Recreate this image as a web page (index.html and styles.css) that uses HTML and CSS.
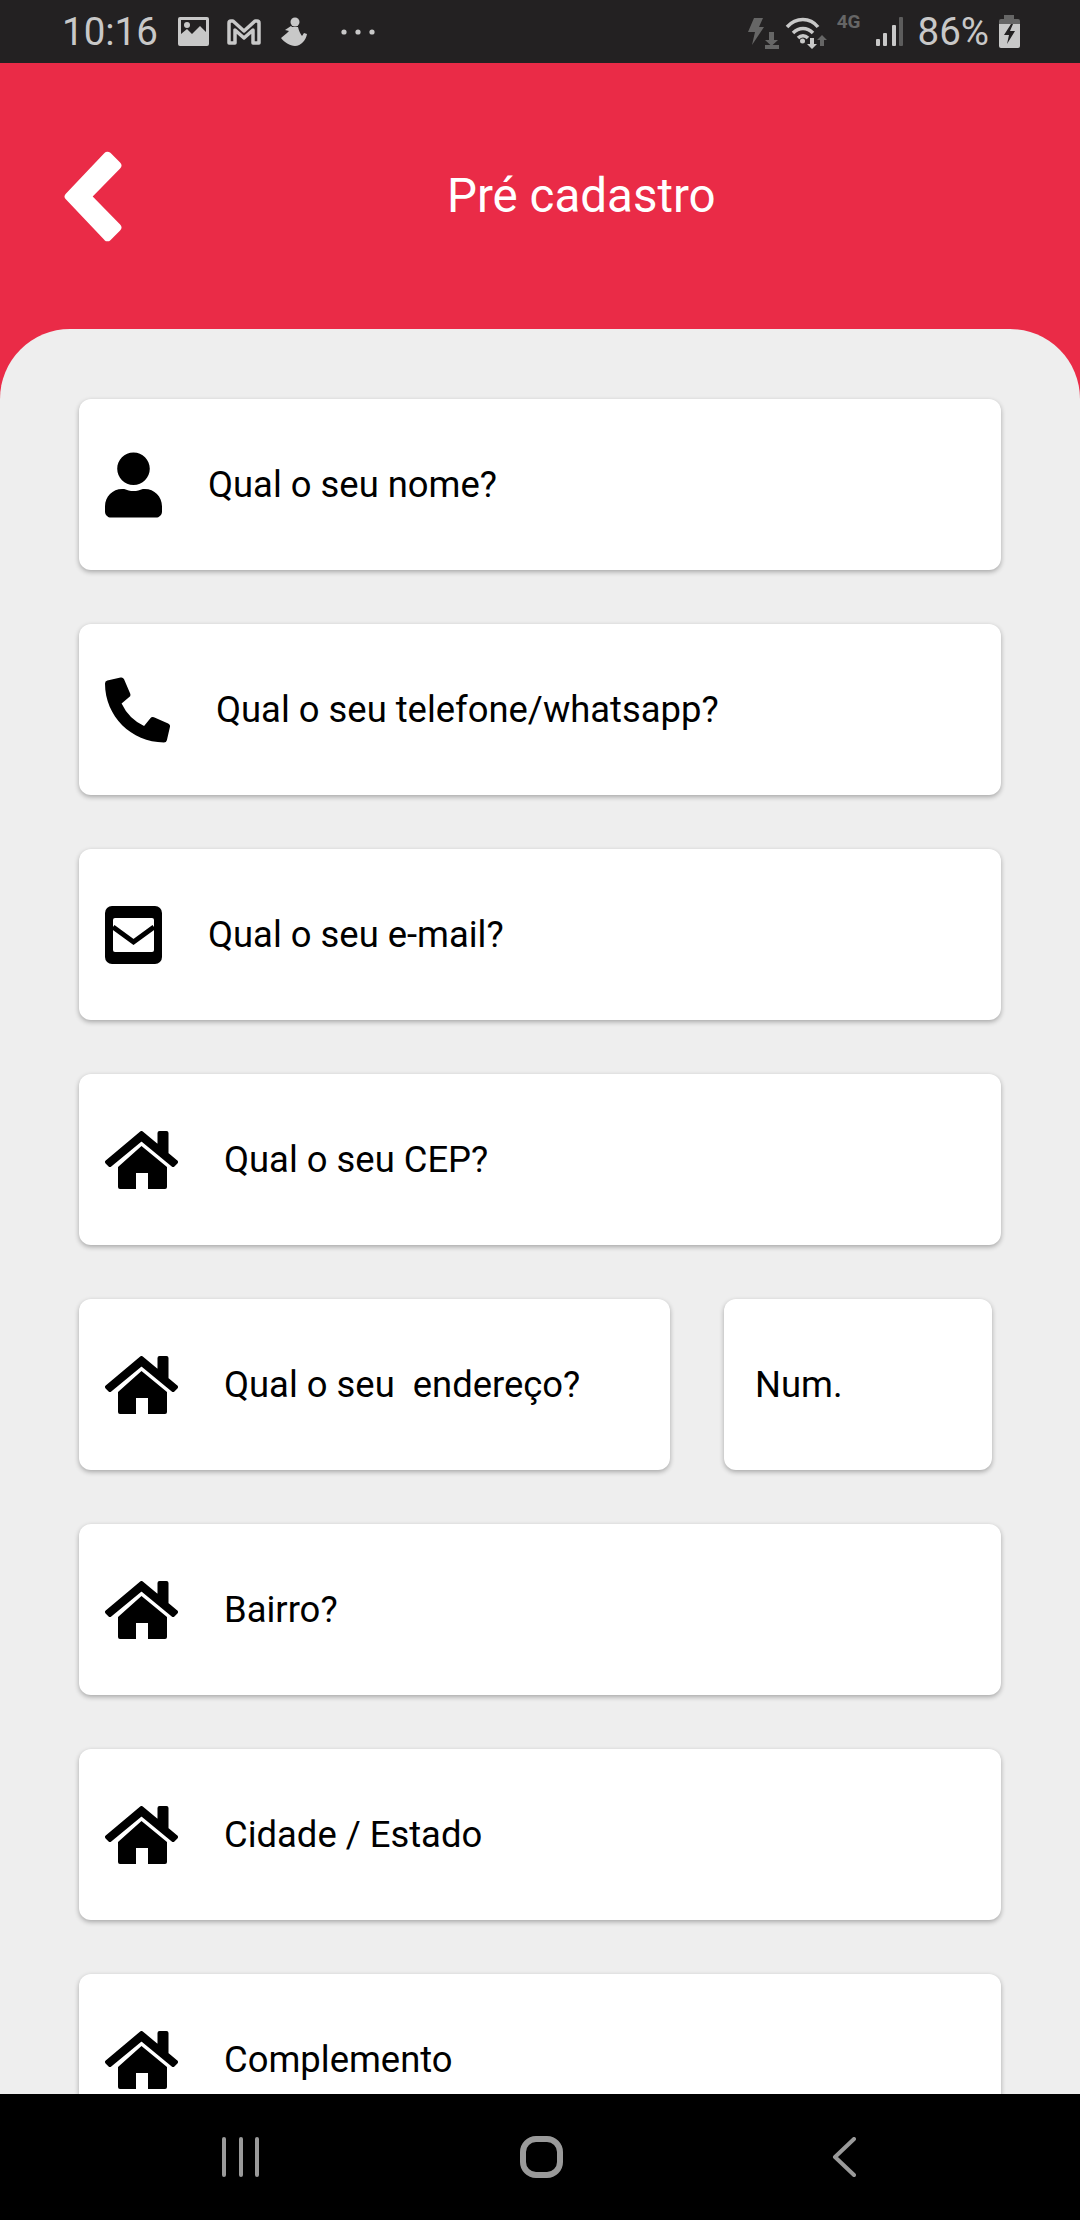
FILE: index.html
```html
<!DOCTYPE html>
<html lang="pt-BR">

<head>
    <meta charset="UTF-8">
    <title>Pré cadastro</title>
    <meta name="viewport" content="width=device-width, initial-scale=1.0">
    <link rel="stylesheet" href="styles.css">
</head>

<body>
    <svg class="sprites" width="0" height="0">
        <symbol id="home" viewBox="0 0 73 58">
            <path d="M36.500 2 L2 31 L5 34 L36.500 8 L68 34 L71 31 L61.500 23 V2 H54.500 V17 Z" stroke="#000" stroke-width="4" stroke-linejoin="round" />
            <path d="M13 36 L36.500 15 L62 36 V56 Q62 58 60 58 H43 V42 H31 V58 H15 Q13 58 13 56 Z" />
        </symbol>
    </svg>

    <div class="phone">
        <div class="statusbar">
            <span class="clock">10:16</span>
            <svg class="st-image" width="31" height="29" viewBox="0 0 31 29">
                <path fill-rule="evenodd" d="M2 0H29Q31 0 31 2V27Q31 29 29 29H2Q0 29 0 27V2Q0 0 2 0ZM3 3V17L9 12L14 17L22 9L28 15V3Z" />
                <circle cx="9" cy="8" r="3" />
            </svg>
            <svg class="st-mail" width="34" height="26" viewBox="0 0 34 26">
                <path d="M2 24V4Q2 2 4 2H6L17 12L28 2H30Q32 2 32 4V24H26V11L17 19L8 11V24Z" fill="none" stroke="#c8c8c8" stroke-width="3.500" stroke-linejoin="round" />
            </svg>
            <svg class="st-figure" width="27" height="29" viewBox="0 0 27 29">
                <circle cx="14" cy="5" r="4.500" />
                <path d="M11 10H17C18 14 19 16 21 19L23 16L26 17C25 23 20 29 14 29C9 29 3 25 0 21L6 16L8 14L4 13L10 9Z" />
            </svg>
            <svg class="st-dots" width="34" height="6" viewBox="0 0 34 6">
                <circle cx="3" cy="3" r="2.600" />
                <circle cx="17" cy="3" r="2.600" />
                <circle cx="31" cy="3" r="2.600" />
            </svg>

            <div class="status-right">
                <svg class="st-flash" width="31" height="31" viewBox="0 0 31 31">
                    <path d="M6 0H15L11 9H16L4 27L7 14H0Z" />
                    <path d="M21 14H26V22H30L23.500 28L17 22H21ZM17 27H31V31H17Z" />
                </svg>
                <svg class="st-wifi" width="42" height="32" viewBox="0 0 42 32">
                    <path d="M2 10C11 0 25 0 33 10M8 16C14 10 22 10 28 16M13 21C16 18 20 18 23 21" fill="none" stroke="#c8c8c8" stroke-width="3.500" />
                    <circle cx="17.500" cy="24" r="2.500" fill="#c8c8c8" />
                    <path d="M25 21H29V27H32L27 32L22 27H25Z" fill="#c8c8c8" />
                    <path d="M35 29V23H32L37 18L42 23H39V29Z" fill="#666" />
                </svg>
                <span class="net">4G</span>
                <svg class="st-signal" width="27" height="29" viewBox="0 0 27 29">
                    <rect x="0" y="22" width="4" height="7" rx="1" fill="#c8c8c8" />
                    <rect x="7" y="16" width="4" height="13" rx="1" fill="#c8c8c8" />
                    <rect x="16" y="8" width="4" height="21" rx="1" fill="#c8c8c8" />
                    <rect x="23" y="0" width="4" height="29" rx="1" fill="#5c5c5c" />
                </svg>
                <span class="percent">86%</span>
                <svg class="st-battery" width="21" height="33" viewBox="0 0 21 33">
                    <path d="M5 0H15V4H19Q21 4 21 6V9H0V6Q0 4 2 4H5Z" fill="#666" />
                    <path d="M0 9H21V31Q21 33 19 33H2Q0 33 0 31Z" fill="#c8c8c8" />
                    <path d="M12 9L5 20H10L8 29L16 16H11L14 9Z" fill="#232122" />
                </svg>
            </div>
        </div>

        <header class="topbar">
            <svg class="back" width="60" height="93" viewBox="0 0 58 90">
                <polygon points="5.600,45 43,5.600 52.400,15 23,45 52.400,75 43,84.400" fill="#fff" stroke="#fff" stroke-width="8" stroke-linejoin="round" />
            </svg>
            <h1>Pré cadastro</h1>
        </header>

        <main class="form">
            <div class="field">
                <svg class="icon" width="57" height="66" viewBox="0 0 448 512">
                    <path d="M224 256c70.700 0 128-57.300 128-128S294.700 0 224 0 96 57.300 96 128s57.300 128 128 128zm89.600 32h-16.700c-22.200 10.200-46.900 16-72.900 16s-50.600-5.800-72.900-16h-16.700C60.200 288 0 348.200 0 422.400V464c0 26.500 21.500 48 48 48h352c26.500 0 48-21.500 48-48v-41.600c0-74.200-60.200-134.400-134.400-134.400z" />
                </svg>
                <span>Qual o seu nome?</span>
            </div>
            <div class="field">
                <svg class="icon" width="65" height="66" viewBox="0 0 512 512">
                    <path d="M497.400 361.800l-112-48a24 24 0 0 0-28 6.900l-49.600 60.600A370.700 370.700 0 0 1 130.600 204.100l60.600-49.600a24 24 0 0 0 6.900-28l-48-112A24.200 24.200 0 0 0 122.600.6l-104 24A24 24 0 0 0 0 48c0 256.500 207.900 464 464 464a24 24 0 0 0 23.400-18.600l24-104a24.300 24.300 0 0 0-14-27.600z" />
                </svg>
                <span>Qual o seu telefone/whatsapp?</span>
            </div>
            <div class="field">
                <svg class="icon" width="57" height="58" viewBox="0 0 57 58">
                    <rect width="57" height="58" rx="7" />
                    <rect x="8" y="12" width="41" height="34" rx="2" fill="#fff" />
                    <path d="M8 21L28.500 36L49 21" fill="none" stroke="#000" stroke-width="5" />
                </svg>
                <span>Qual o seu e-mail?</span>
            </div>
            <div class="field">
                <svg class="icon" width="73" height="58"><use href="#home" /></svg>
                <span>Qual o seu CEP?</span>
            </div>
            <div class="field-row">
                <div class="field field-street">
                    <svg class="icon" width="73" height="58"><use href="#home" /></svg>
                    <span>Qual o seu &nbsp;endereço?</span>
                </div>
                <div class="field field-num">
                    <span>Num.</span>
                </div>
            </div>
            <div class="field">
                <svg class="icon" width="73" height="58"><use href="#home" /></svg>
                <span>Bairro?</span>
            </div>
            <div class="field">
                <svg class="icon" width="73" height="58"><use href="#home" /></svg>
                <span>Cidade / Estado</span>
            </div>
            <div class="field">
                <svg class="icon" width="73" height="58"><use href="#home" /></svg>
                <span>Complemento</span>
            </div>
        </main>

        <nav class="navbar">
            <svg class="nav-recents" width="38" height="40" viewBox="0 0 38 40">
                <path d="M2 2V38M19 2V38M35 2V38" />
            </svg>
            <svg class="nav-home" width="43" height="42" viewBox="0 0 43 42">
                <rect x="3" y="3" width="37" height="36" rx="13" />
            </svg>
            <svg class="nav-back" width="24" height="40" viewBox="0 0 24 40">
                <path d="M22 2L3 20L22 38" />
            </svg>
        </nav>
    </div>
</body>

</html>
```

FILE: styles.css
```css
* {
    box-sizing: border-box;
}

html,
body {
    margin: 0;
    padding: 0;
}

body {
    font-family: 'Roboto', 'Liberation Sans', sans-serif;
    background-color: #ea2b47;
}

.sprites {
    position: absolute;
}

.phone {
    width: 1080px;
    height: 2220px;
    display: flex;
    flex-direction: column;
    overflow: hidden;
}

/* Status bar */
.statusbar {
    height: 63px;
    flex-shrink: 0;
    display: flex;
    align-items: center;
    padding: 0 60px 0 62px;
    background-color: #232122;
    color: #c8c8c8;
    fill: #c8c8c8;
    font-size: 38.500px;
}

.clock {
    margin-right: 20px;
}

.st-mail {
    margin-left: 18px;
}

.st-figure {
    margin-left: 20px;
}

.st-dots {
    margin-left: 33px;
}

.status-right {
    margin-left: auto;
    display: flex;
    align-items: center;
}

.st-flash {
    fill: #666;
    margin-top: 4px;
}

.st-wifi {
    margin-left: 6px;
    margin-top: 3px;
}

.net {
    margin-left: 10px;
    margin-bottom: 20px;
    font-size: 19px;
    font-weight: 700;
    color: #666;
}

.st-signal {
    margin-left: 15px;
}

.percent {
    margin-left: 15px;
}

.st-battery {
    margin-left: 10px;
}

/* Red header */
.topbar {
    height: 266px;
    flex-shrink: 0;
    display: flex;
    align-items: center;
    padding-left: 63px;
    color: white;
}

.topbar h1 {
    margin: 0 0 0 324px;
    font-size: 47.500px;
    font-weight: 400;
}

/* Form */
.form {
    flex: 1;
    min-height: 0;
    overflow: hidden;
    display: flex;
    flex-direction: column;
    gap: 54px;
    padding: 70px 79px 0;
    background-color: #eeeeee;
    border-radius: 70px 70px 0 0;
}

.field {
    height: 171px;
    flex-shrink: 0;
    display: flex;
    align-items: center;
    gap: 46px;
    padding-left: 26px;
    background-color: white;
    border-radius: 12px;
    box-shadow: 0 2px 5px rgba(0, 0, 0, 0.3);
    font-size: 36.400px;
    color: black;
}

.field-row {
    display: flex;
    gap: 54px;
}

.field-street {
    width: 591px;
}

.field-num {
    width: 268px;
    padding-left: 31px;
}

/* Android nav */
.navbar {
    height: 126px;
    flex-shrink: 0;
    display: flex;
    align-items: center;
    padding-left: 222px;
    background-color: black;
}

.navbar svg {
    fill: none;
    stroke: #9a9a9a;
    stroke-linecap: round;
    stroke-linejoin: round;
}

.navbar path {
    stroke-width: 4;
}

.navbar rect {
    stroke-width: 6;
}

.nav-home {
    margin-left: 260px;
}

.nav-back {
    margin-left: 269px;
}
```
